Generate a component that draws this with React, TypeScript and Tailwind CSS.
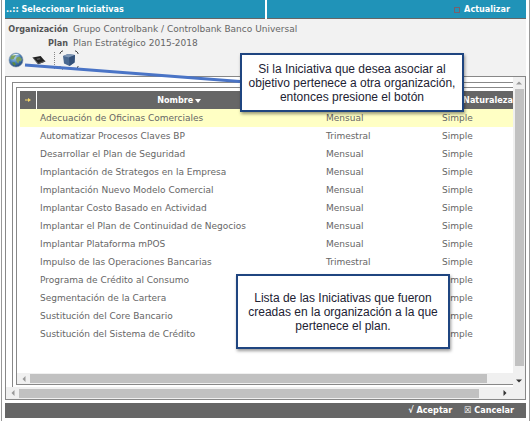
import type { ReactNode } from "react";

type Initiative = { name: string; frequency?: string; nature: string };

const initiatives: Initiative[] = [
  { name: "Adecuación de Oficinas Comerciales", frequency: "Mensual", nature: "Simple" },
  { name: "Automatizar Procesos Claves BP", frequency: "Trimestral", nature: "Simple" },
  { name: "Desarrollar el Plan de Seguridad", frequency: "Mensual", nature: "Simple" },
  { name: "Implantación de Strategos en la Empresa", frequency: "Mensual", nature: "Simple" },
  { name: "Implantación Nuevo Modelo Comercial", frequency: "Mensual", nature: "Simple" },
  { name: "Implantar Costo Basado en Actividad", frequency: "Mensual", nature: "Simple" },
  { name: "Implantar el Plan de Continuidad de Negocios", frequency: "Mensual", nature: "Simple" },
  { name: "Implantar Plataforma mPOS", frequency: "Mensual", nature: "Simple" },
  { name: "Impulso de las Operaciones Bancarias", frequency: "Trimestral", nature: "Simple" },
  { name: "Programa de Crédito al Consumo", nature: "Simple" },
  { name: "Segmentación de la Cartera", nature: "Simple" },
  { name: "Sustitución del Core Bancario", nature: "Simple" },
  { name: "Sustitución del Sistema de Crédito", nature: "Simple" },
];

const boldFont = "font-['DejaVu_Sans_Condensed','DejaVu_Sans',sans-serif] font-bold";

function GlobeIcon() {
  return (
    <svg width="16" height="16" viewBox="0 0 16 16" aria-hidden="true">
      <defs>
        <radialGradient id="sea" cx="0.4" cy="0.3" r="0.75">
          <stop offset="0" stopColor="#b5d4ee" />
          <stop offset="0.5" stopColor="#4c85bd" />
          <stop offset="1" stopColor="#1d3f70" />
        </radialGradient>
      </defs>
      <circle cx="8" cy="8" r="7" fill="url(#sea)" stroke="#8296ac" strokeWidth="0.6" />
      <path d="M2 6.5 3.5 3.6 6.6 2.2 8 3.4 6.6 5.2 5.6 7 3.4 7.6Z" fill="#7da060" />
      <path d="M8.6 5.4 11.5 4.4 14 7 13 9.6 11.2 9 10.4 11.6 8.8 10 8 7.4Z" fill="#7da060" />
      <path d="M4.4 10 7 10.6 7.8 12.6 6.4 13.8 4.6 12Z" fill="#5c8840" />
      <path d="M4 3.4Q8 0.8 11.6 3.2Q8 2.8 4 3.4Z" fill="#eef6fb" />
    </svg>
  );
}

function BookIcon() {
  return (
    <svg width="14" height="12" viewBox="0 0 14 12" aria-hidden="true">
      <path d="M0.5 3.6 8.6 2 13.4 7.4 6 10.2Z" fill="#222" />
      <path d="M0.5 3.6 6 10.2 6 9 1 3.2Z" fill="#777" />
      <path d="M6 10.2 13.4 7.4 13 6.4 6.2 8.9Z" fill="#555" />
      <path d="M4.4 4.7 7.6 4 8.6 5.2 5.4 6.1Z" fill="#5a5a5a" />
    </svg>
  );
}

function CubeIcon() {
  return (
    <svg width="20" height="20" viewBox="0 0 20 20" aria-hidden="true">
      <path d="M1 4V3L3 1H4M16 1H17L19 3V4M1 16V17L3 19H4M16 19H17L19 17V16" fill="none" stroke="#444" strokeWidth="1" />
      <path d="M4 6 9 4 16 5 15.5 12.5 10.5 16 5 13.5Z" fill="#4a6991" />
      <path d="M4 6 9 4 16 5 10 7.4Z" fill="#7f97b5" />
      <path d="M10 7.4 16 5 15.5 12.5 10.5 16Z" fill="#34517a" />
    </svg>
  );
}

function Arrow({ direction, dark = false }: { direction: "up" | "down" | "left" | "right"; dark?: boolean }) {
  const shapes = {
    up: "M1 5.5 4 2.5 7 5.5Z",
    down: "M1 2.5 7 2.5 4 5.5Z",
    left: "M5.5 1 2.5 4 5.5 7Z",
    right: "M2.5 1 5.5 4 2.5 7Z",
  };
  return (
    <svg width="8" height="8" viewBox="0 0 8 8" className={dark ? "text-[#333]" : "text-[#999]"} aria-hidden="true">
      <path d={shapes[direction]} fill="currentColor" />
    </svg>
  );
}

function Field({ label, children }: { label: string; children: ReactNode }) {
  return (
    <div className="flex h-[14px] items-center gap-[5px] leading-[14px]">
      <dt className={`w-[63px] shrink-0 text-right text-[#555] ${boldFont}`}>{label}</dt>
      <dd className="whitespace-nowrap">{children}</dd>
    </div>
  );
}

function Callout({ className, children }: { className: string; children: ReactNode }) {
  return (
    <aside
      className={`absolute flex items-center justify-center border-2 border-[#1f4580] bg-white text-center font-['Liberation_Sans',Arial,sans-serif] text-[12px] leading-[14px] text-[#222233] shadow-[1px_2px_3px_rgba(0,0,0,0.4)] ${className}`}
    >
      <p className="whitespace-nowrap">{children}</p>
    </aside>
  );
}

export default function App() {
  return (
    <div className="relative overflow-hidden bg-white pl-px font-['DejaVu_Sans',Verdana,sans-serif] text-[9px] text-[#666]">
      <div className="border-x border-[#999] px-[3px] pb-[3px]">
        <header className={`grid h-[19px] grid-cols-2 gap-[2px] text-white ${boldFont}`}>
          <h1 className="flex items-center border-b border-[#666] bg-[#2093b8] pt-[2px] pl-px">
            ..:: Seleccionar Iniciativas
          </h1>
          <div className="flex items-center justify-end border-b border-[#666] bg-[#2093b8] pt-[2px] pr-4">
            <button type="button" className="flex items-center gap-1">
              <span className="size-[6px] border border-[#77606c]" />
              Actualizar
            </button>
          </div>
        </header>

        <section className="h-[57px] bg-[#f2f2f2] pt-[3px]">
          <dl>
            <Field label="Organización">Grupo Controlbank / Controlbank Banco Universal</Field>
            <Field label="Plan">Plan Estratégico 2015-2018</Field>
          </dl>
          <div className="flex h-5 items-center pl-[3px]">
            <button type="button" aria-label="Organizaciones"><GlobeIcon /></button>
            <button type="button" aria-label="Planes" className="ml-2"><BookIcon /></button>
            <span className="mr-1 ml-2 h-[17px] border-l border-dotted border-[#888]" />
            <button type="button" aria-label="Iniciativas"><CubeIcon /></button>
          </div>
        </section>

        <main className="border border-[#888]">
          <div className="flex">
            <div className="min-w-0 flex-1 pt-[5px] pl-[6px]">
              <div className="border-t border-l border-[#888] pt-1 pb-[2px] pl-[3px]">
                <div className="border-y border-l border-[#888] pt-[3px]">
                  <div className="overflow-hidden pb-[30px] pl-[3px]">
                    <table className="w-[518px] table-fixed border-collapse text-left">
                      <colgroup>
                        <col className="w-4" />
                        <col className="w-[286px]" />
                        <col className="w-[116px]" />
                        <col className="w-[100px]" />
                      </colgroup>
                      <thead className={boldFont}>
                        <tr className="h-[18px] bg-[#666] text-white">
                          <th className="border-r border-white p-0">
                            <svg width="8" height="6" viewBox="0 0 8 6" className="mx-auto" aria-hidden="true">
                              <path d="M1 3H5" stroke="#f5d76a" strokeWidth="1" />
                              <path d="M4 1 7 3 4 5Z" fill="#f5d76a" />
                            </svg>
                          </th>
                          <th className="p-0 pt-[2px] text-center">
                            <span className="inline-flex items-center gap-[2px]">
                              Nombre
                              <svg width="6" height="4" viewBox="0 0 6 4" aria-hidden="true">
                                <path d="M0 0H6L3 4Z" fill="#fff" />
                              </svg>
                            </span>
                          </th>
                          <th className="p-0" />
                          <th className="p-0 pt-[2px] text-center">Naturaleza</th>
                        </tr>
                      </thead>
                      <tbody>
                        {initiatives.map((item, index) => (
                          <tr key={item.name} className={index === 0 ? "h-[18px] bg-[#ffffc4]" : "h-[18px]"}>
                            <td className="p-0" />
                            <td className="p-0 pt-[2px] pl-1">{item.name}</td>
                            <td className="p-0 pt-[2px] pl-1">{item.frequency}</td>
                            <td className="p-0 pt-[2px] pl-1">{item.nature}</td>
                          </tr>
                        ))}
                      </tbody>
                    </table>
                  </div>
                  <div className="flex h-[11px] items-center bg-[#f0f0f0]">
                    <span className="flex w-[13px] justify-center"><Arrow direction="left" /></span>
                    <span className="mr-[26px] h-[9px] flex-1 bg-[#c1c1c1]" />
                  </div>
                </div>
              </div>
            </div>
            <div className="flex w-3 flex-col items-center bg-[#f0f0f0]">
              <span className="flex h-3 items-center"><Arrow direction="up" /></span>
              <span className="w-[9px] flex-1 bg-[#c1c1c1]" />
              <span className="flex h-[21px] items-end pb-[2px]"><Arrow direction="down" dark /></span>
            </div>
          </div>
          <div className="flex h-[12px] items-center bg-[#f0f0f0]">
            <span className="flex w-[13px] justify-center"><Arrow direction="left" /></span>
            <span className="h-[9px] flex-1 bg-[#c1c1c1]" />
            <span className="flex w-[34px] justify-end pr-1"><Arrow direction="right" dark /></span>
            <span className="w-3" />
          </div>
        </main>

        <footer className={`mt-[3px] flex h-[15px] items-center justify-end gap-3 bg-[#666] pr-3 text-white ${boldFont}`}>
          <button type="button">√ Aceptar</button>
          <button type="button">☒ Cancelar</button>
        </footer>
      </div>

      <svg className="absolute top-[60px] left-[24px]" width="218" height="26" viewBox="0 0 218 26" aria-hidden="true">
        <path d="M1 5 216 21.5" stroke="#4a74c6" strokeWidth="3" />
      </svg>
      <Callout className="top-[53px] left-[240px] h-[59px] w-[224px]">
        Si la Iniciativa que desea asociar al
        <br />
        objetivo pertenece a otra organización,
        <br />
        entonces presione el botón
      </Callout>
      <Callout className="top-[274px] left-[236px] h-[75px] w-[214px]">
        Lista de las Iniciativas que fueron
        <br />
        creadas en la organización a la que
        <br />
        pertenece el plan.
      </Callout>
    </div>
  );
}
